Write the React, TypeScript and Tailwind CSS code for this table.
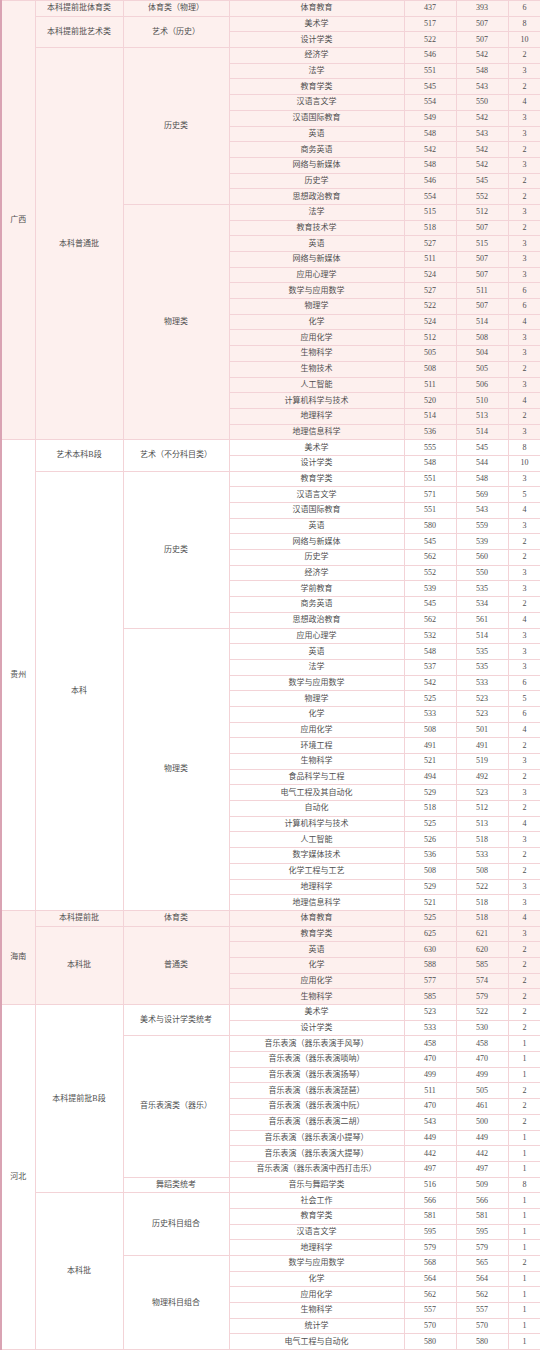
import React from "react";

type Major = [string, string, string, string];
type Cat = { name: string; majors: Major[] };
type Batch = { name: string; cats: Cat[] };
type Prov = { name: string; pink: boolean; batches: Batch[] };

const m = (s: string): Major[] =>
  s
    .trim()
    .split("\n")
    .map((l) => l.trim().split(/\s+/) as Major);

const data: Prov[] = [
  {
    name: "广西",
    pink: true,
    batches: [
      { name: "本科提前批体育类", cats: [{ name: "体育类（物理）", majors: m("体育教育 437 393 6") }] },
      { name: "本科提前批艺术类", cats: [{ name: "艺术（历史）", majors: m("美术学 517 507 8\n设计学类 522 507 10") }] },
      {
        name: "本科普通批",
        cats: [
          {
            name: "历史类",
            majors: m(`经济学 546 542 2
法学 551 548 3
教育学类 545 543 2
汉语言文学 554 550 4
汉语国际教育 549 542 3
英语 548 543 3
商务英语 542 542 2
网络与新媒体 548 542 3
历史学 546 545 2
思想政治教育 554 552 2`),
          },
          {
            name: "物理类",
            majors: m(`法学 515 512 3
教育技术学 518 507 2
英语 527 515 3
网络与新媒体 511 507 3
应用心理学 524 507 3
数学与应用数学 527 511 6
物理学 522 507 6
化学 524 514 4
应用化学 512 508 3
生物科学 505 504 3
生物技术 508 505 2
人工智能 511 506 3
计算机科学与技术 520 510 4
地理科学 514 513 2
地理信息科学 536 514 3`),
          },
        ],
      },
    ],
  },
  {
    name: "贵州",
    pink: false,
    batches: [
      { name: "艺术本科B段", cats: [{ name: "艺术（不分科目类）", majors: m("美术学 555 545 8\n设计学类 548 544 10") }] },
      {
        name: "本科",
        cats: [
          {
            name: "历史类",
            majors: m(`教育学类 551 548 3
汉语言文学 571 569 5
汉语国际教育 551 543 4
英语 580 559 3
网络与新媒体 545 539 2
历史学 562 560 2
经济学 552 550 3
学前教育 539 535 3
商务英语 545 534 2
思想政治教育 562 561 4`),
          },
          {
            name: "物理类",
            majors: m(`应用心理学 532 514 3
英语 548 535 3
法学 537 535 3
数学与应用数学 542 533 6
物理学 525 523 5
化学 533 523 6
应用化学 508 501 4
环境工程 491 491 2
生物科学 521 519 3
食品科学与工程 494 492 2
电气工程及其自动化 529 523 3
自动化 518 512 2
计算机科学与技术 525 513 4
人工智能 526 518 3
数字媒体技术 536 533 2
化学工程与工艺 508 508 2
地理科学 529 522 3
地理信息科学 521 518 3`),
          },
        ],
      },
    ],
  },
  {
    name: "海南",
    pink: true,
    batches: [
      { name: "本科提前批", cats: [{ name: "体育类", majors: m("体育教育 525 518 4") }] },
      {
        name: "本科批",
        cats: [
          {
            name: "普通类",
            majors: m(`教育学类 625 621 3
英语 630 620 2
化学 588 585 2
应用化学 577 574 2
生物科学 585 579 2`),
          },
        ],
      },
    ],
  },
  {
    name: "河北",
    pink: false,
    batches: [
      {
        name: "本科提前批B段",
        cats: [
          { name: "美术与设计学类统考", majors: m("美术学 523 522 2\n设计学类 533 530 2") },
          {
            name: "音乐表演类（器乐）",
            majors: m(`音乐表演（器乐表演手风琴） 458 458 1
音乐表演（器乐表演唢呐） 470 470 1
音乐表演（器乐表演扬琴） 499 499 1
音乐表演（器乐表演琵琶） 511 505 2
音乐表演（器乐表演中阮） 470 461 2
音乐表演（器乐表演二胡） 543 500 2
音乐表演（器乐表演小提琴） 449 449 1
音乐表演（器乐表演大提琴） 442 442 1
音乐表演（器乐表演中西打击乐） 497 497 1`),
          },
          { name: "舞蹈类统考", majors: m("音乐与舞蹈学类 516 509 8") },
        ],
      },
      {
        name: "本科批",
        cats: [
          {
            name: "历史科目组合",
            majors: m(`社会工作 566 566 1
教育学类 581 581 1
汉语言文学 595 595 1
地理科学 579 579 1`),
          },
          {
            name: "物理科目组合",
            majors: m(`数学与应用数学 568 565 2
化学 564 564 1
应用化学 562 562 1
生物科学 557 557 1
统计学 570 570 1
电气工程与自动化 580 580 1`),
          },
        ],
      },
    ],
  },
];

const cell = "border border-[#f3d3d7] text-center align-middle p-0 leading-none whitespace-nowrap";

export default function App() {
  const rows: React.ReactNode[] = [];
  data.forEach((p, pi) => {
    const pRows = p.batches.reduce((a, b) => a + b.cats.reduce((x, c) => x + c.majors.length, 0), 0);
    const bg = p.pink ? "bg-[#fdf0ee]" : "bg-white";
    let firstP = true;
    p.batches.forEach((b, bi) => {
      const bRows = b.cats.reduce((x, c) => x + c.majors.length, 0);
      let firstB = true;
      b.cats.forEach((c, ci) => {
        c.majors.forEach((mj, mi) => {
          rows.push(
            <tr key={`${pi}-${bi}-${ci}-${mi}`} className={`${bg} h-[15.7px]`}>
              {firstP && (
                <td rowSpan={pRows} className={`${cell} border-l-2 border-l-[#d9a3b3]`}>
                  {p.name}
                </td>
              )}
              {firstB && (
                <td rowSpan={bRows} className={cell}>
                  {b.name}
                </td>
              )}
              {mi === 0 && (
                <td rowSpan={c.majors.length} className={cell}>
                  {c.name}
                </td>
              )}
              <td className={cell}>{mj[0]}</td>
              <td className={cell}>{mj[1]}</td>
              <td className={cell}>{mj[2]}</td>
              <td className={`${cell} border-r-[#ecc4cc]`}>{mj[3]}</td>
            </tr>
          );
          firstP = false;
          firstB = false;
        });
      });
    });
  });

  return (
    <div
      className="w-[540px] h-[1350px] overflow-hidden bg-white text-[8px] text-[#4f4f4f]"
      style={{ fontFamily: '"Liberation Serif", "Noto Sans CJK SC", serif' }}
    >
      <table className="w-[540px] table-fixed border-collapse">
        <colgroup>
          <col className="w-[34px]" />
          <col className="w-[88px]" />
          <col className="w-[106px]" />
          <col className="w-[175px]" />
          <col className="w-[52px]" />
          <col className="w-[52px]" />
          <col className="w-[33px]" />
        </colgroup>
        <tbody>{rows}</tbody>
      </table>
    </div>
  );
}
